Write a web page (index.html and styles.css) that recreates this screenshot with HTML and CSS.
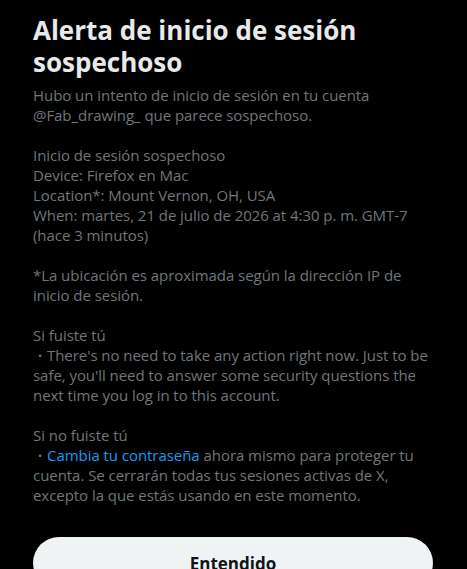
FILE: index.html
```html
<!DOCTYPE html>
<html>
<head>
    <meta charset="UTF-8">
    <title>Alerta de inicio de sesión sospechoso</title>
    <link rel="stylesheet" href="styles.css">
</head>
<body>
    <div class="sheet">
        <h1>Alerta de inicio de sesión sospechoso</h1>

        <div class="message">
            <p>Hubo un intento de inicio de sesión en tu cuenta @Fab_drawing_ que parece sospechoso.</p>

            <p>
                Inicio de sesión sospechoso<br>
                Device: Firefox en Mac<br>
                Location*: Mount Vernon, OH, USA<br>
                When: martes, 21 de julio de 2026 at 4:30 p. m. GMT-7 (hace 3 minutos)
            </p>

            <p>*La ubicación es aproximada según la dirección IP de inicio de sesión.</p>

            <p>
                Si fuiste tú<br>
                <span class="bullet">•</span>There's no need to take any action right now. Just to be safe, you'll need to answer some security questions the next time you log in to this account.
            </p>

            <p>
                Si no fuiste tú<br>
                <span class="bullet">•</span><a href="#">Cambia tu contraseña</a> ahora mismo para proteger tu cuenta. Se cerrarán todas tus sesiones activas de X, excepto la que estás usando en este momento.
            </p>
        </div>

        <button type="button" class="primary">Entendido</button>
    </div>
</body>
</html>
```

FILE: styles.css
```css
body {
    margin: 0;
    background: #000;
    font-family: "Open Sans", "Noto Sans", sans-serif;
}
.sheet {
    width: 400px;
    padding: 14px 33px 0;
}
h1 {
    margin: 0 0 7px;
    font-size: 26px;
    line-height: 32px;
    font-weight: 700;
    color: #e7e9ea;
}
.message {
    color: #71767b;
    font-size: 15px;
    line-height: 20px;
    letter-spacing: -0.05px;
}
.message p {
    margin: 0 0 20px;
}
.message a {
    color: #1d9bf0;
    text-decoration: none;
}
/* small dot list marker, kept inline so the text wraps under it */
.bullet {
    display: inline-block;
    width: 14px;
    padding-left: 5px;
    box-sizing: border-box;
    font-size: 11px;
    line-height: 0;
    vertical-align: 1px;
}
button.primary {
    display: block;
    width: 100%;
    height: 52px;
    margin-top: 32px;
    border: none;
    border-radius: 26px;
    background: #eff3f4;
    color: #0f1419;
    font-family: inherit;
    font-size: 17px;
    font-weight: 700;
    cursor: pointer;
}
```
